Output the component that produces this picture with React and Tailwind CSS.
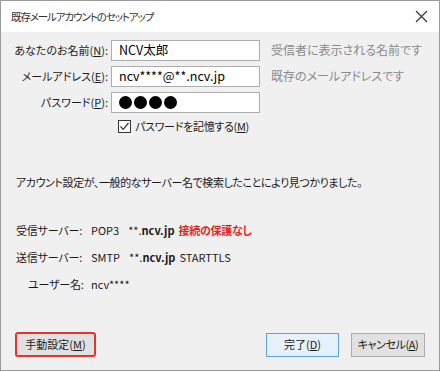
import React from "react";

function Field({ label, mnemonic, value, hint, dots }) {
    return (
        <div className="flex items-center h-[26px]">
            <div className="w-[110px] text-right pr-[3px] whitespace-nowrap tracking-[0px]">
                {label}(<span className="underline">{mnemonic}</span>):
            </div>
            <div className="w-[149px] h-[21px] bg-white border border-[#adadad] flex items-center px-[7px] text-[12.5px] text-black whitespace-nowrap">
                {dots ? (
                    <span className="flex gap-[2px]">
                        {[0, 1, 2, 3].map((i) => (
                            <span key={i} className="w-[13px] h-[13px] rounded-full bg-black" />
                        ))}
                    </span>
                ) : (
                    value
                )}
            </div>
            <div className="pl-[11px] text-[12px] text-[#8a8a8a] whitespace-nowrap">{hint}</div>
        </div>
    );
}

export default function App() {
    return (
        <div className="w-[440px] h-[371px] bg-[#f0f0f0] border border-[#9a9a9a] flex flex-col font-['Noto_Sans_CJK_JP','Noto_Sans',sans-serif] [font-feature-settings:'palt'] text-[11px] text-[#1a1a1a]">
            {/* Title bar */}
            <div className="h-[31px] bg-white flex items-center justify-between pl-[10px] pr-[9px] shrink-0">
                <span className="text-[10.5px] text-[#333] tracking-[-1.1px]">既存メールアカウントのセットアップ</span>
                <svg width="13" height="13" viewBox="0 0 13 13" className="mr-[2px]">
                    <path d="M1 1 L12 12 M12 1 L1 12" stroke="#333" strokeWidth="1.1" />
                </svg>
            </div>

            {/* Form */}
            <div className="flex flex-col pt-[5px]">
                <Field label="あなたのお名前" mnemonic="N" value="NCV太郎" hint="受信者に表示される名前です" />
                <Field label="メールアドレス" mnemonic="E" value="ncv****@**.ncv.jp" hint="既存のメールアドレスです" />
                <Field label="パスワード" mnemonic="P" dots hint="" />
                <div className="flex items-center pl-[117px] h-[22px] gap-[4px] whitespace-nowrap tracking-[-0.3px]">
                    <span className="w-[13px] h-[13px] border border-[#333] bg-white flex items-center justify-center">
                        <svg width="11" height="11" viewBox="0 0 11 11">
                            <path d="M1.5 5.5 L4.2 8.3 L9.5 2" stroke="#333" strokeWidth="1.2" fill="none" />
                        </svg>
                    </span>
                    <span>
                        パスワードを記憶する(<span className="underline">M</span>)
                    </span>
                </div>
            </div>

            <div className="pl-[15px] mt-[37px] whitespace-nowrap tracking-[-0.4px]">
                アカウント設定が、一般的なサーバー名で検索したことにより見つかりました。
            </div>

            {/* Server info */}
            <div className="flex flex-col mt-[30px] gap-[8px] whitespace-nowrap">
                <div className="flex items-center h-[19px]">
                    <span className="w-[90px] pl-[15px] tracking-[-0.2px]">受信サーバー:</span>
                    <span className="mr-[9px]">POP3</span>
                    <span className="mr-[4px]">
                        **.<b className="font-bold">ncv.jp</b>
                    </span>
                    <span className="text-[#e0282a] font-bold tracking-[-0.3px]">接続の保護なし</span>
                </div>
                <div className="flex items-center h-[19px]">
                    <span className="w-[90px] pl-[15px] tracking-[-0.2px]">送信サーバー:</span>
                    <span className="mr-[9px]">SMTP</span>
                    <span className="mr-[4px]">
                        **.<b className="font-bold">ncv.jp</b>
                    </span>
                    <span>STARTTLS</span>
                </div>
                <div className="flex items-center h-[19px]">
                    <span className="w-[90px] pl-[27px] tracking-[-0.2px]">ユーザー名:</span>
                    <span>ncv****</span>
                </div>
            </div>

            {/* Buttons */}
            <div className="flex items-center mt-auto mb-[13px] px-[14px] whitespace-nowrap">
                <button className="w-[81px] h-[25px] rounded-[3px] border-2 border-[#e8322e] bg-[#e1e1e1] flex items-center justify-center">
                    手動設定(<span className="underline">M</span>)
                </button>
                <div className="flex-1" />
                <button className="w-[73px] h-[24px] border border-[#5ea2dc] bg-[#e5f1fb] flex items-center justify-center">
                    完了(<span className="underline">D</span>)
                </button>
                <button className="ml-[12px] w-[74px] h-[24px] border border-[#adadad] bg-[#e1e1e1] flex items-center justify-center tracking-[-0.4px]">
                    キャンセル(<span className="underline">A</span>)
                </button>
            </div>
        </div>
    );
}
